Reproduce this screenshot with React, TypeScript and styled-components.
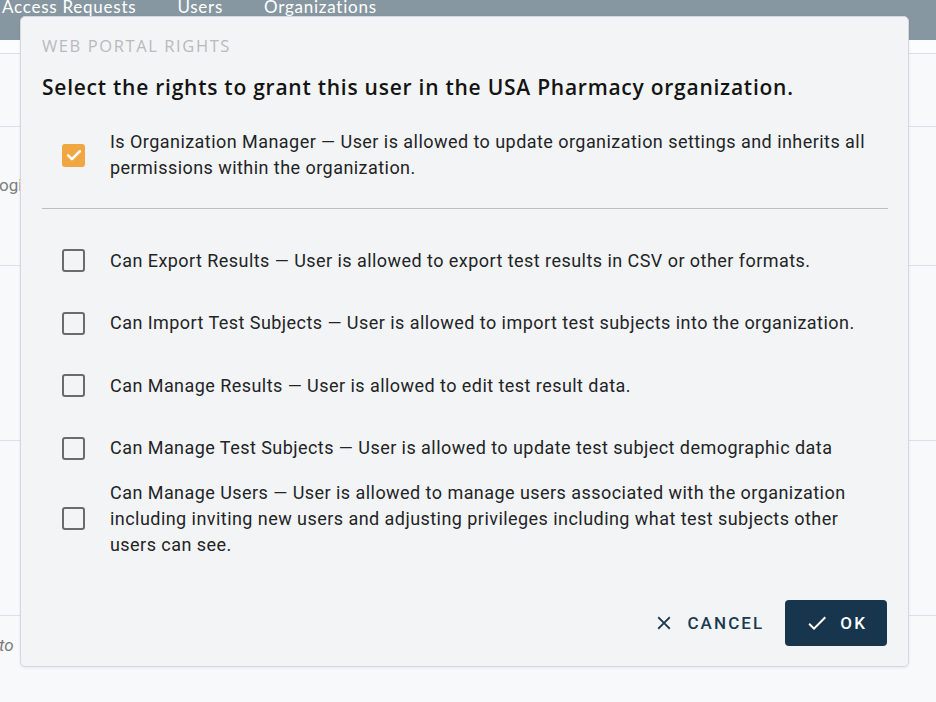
import React from "react";
import styled, { createGlobalStyle } from "styled-components";

const Global = createGlobalStyle`
  html, body { margin: 0; padding: 0; }
  body {
    background: #f8f9fb;
    font-family: Roboto, "Liberation Sans", sans-serif;
    overflow: hidden;
  }
`;

const Page = styled.div`
  position: relative;
  width: 936px;
  height: 702px;
  overflow: hidden;
  background: #f8f9fb;
`;

const NavBar = styled.nav`
  height: 40px;
  background: #8797a1;
  display: flex;
  align-items: flex-start;
  gap: 41px;
  padding-left: 2px;
`;

const NavItem = styled.span`
  font-family: Lato, "Open Sans", sans-serif;
  font-size: 17px;
  line-height: 18px;
  color: #ffffff;
  margin-top: -2px;
  letter-spacing: 0.75px;
`;

const Band = styled.div`
  height: 13px;
  background: #fbfcfd;
  border-bottom: 1px solid #dcdfe3;
`;

const BgRow = styled.div<{ $h: number; $last?: boolean; $pad?: number }>`
  height: ${(p) => p.$h}px;
  border-bottom: ${(p) => (p.$last ? "none" : "1px solid #dcdfe3")};
  padding-top: ${(p) => p.$pad ?? 0}px;
  box-sizing: border-box;
`;

const BgText = styled.span<{ $italic?: boolean }>`
  display: block;
  font-family: Roboto, sans-serif;
  font-size: 17px;
  line-height: 24px;
  color: #7a7d80;
  font-style: ${(p) => (p.$italic ? "italic" : "normal")};
  margin-left: -1px;
`;

const Dialog = styled.div`
  position: absolute;
  top: 16px;
  left: 20px;
  width: 889px;
  height: 651px;
  box-sizing: border-box;
  background: #f3f4f6;
  border: 1px solid #d6d8db;
  border-radius: 5px;
  box-shadow: 0 1px 3px rgba(0, 0, 0, 0.08);
  padding: 19px 21px 0 21px;
  display: flex;
  flex-direction: column;
`;

const Overline = styled.div`
  font-family: "Open Sans", Lato, sans-serif;
  font-size: 16.5px;
  line-height: 20px;
  letter-spacing: 1.6px;
  color: #b9babc;
`;

const Heading = styled.h2`
  margin: 17px 0 0 0;
  font-family: "Open Sans", Lato, sans-serif;
  font-weight: 600;
  font-size: 21px;
  line-height: 28px;
  letter-spacing: 0.75px;
  color: #141414;
`;

const List = styled.div<{ $top: number }>`
  display: flex;
  flex-direction: column;
  margin-top: ${(p) => p.$top}px;
`;

const Row = styled.label`
  display: flex;
  align-items: center;
  min-height: 62.5px;
  padding-left: 20px;
`;

const Box = styled.span<{ $checked?: boolean }>`
  flex: none;
  width: 23px;
  height: 23px;
  box-sizing: border-box;
  border-radius: 3px;
  border: ${(p) => (p.$checked ? "none" : "2.5px solid #6b6b6b")};
  background: ${(p) => (p.$checked ? "#f0a641" : "transparent")};
  display: flex;
  align-items: center;
  justify-content: center;
`;

const RowText = styled.span`
  margin-left: 25px;
  font-family: Roboto, sans-serif;
  font-size: 18px;
  line-height: 26px;
  letter-spacing: 0.45px;
  color: #222426;
  max-width: 765px;
`;

const Divider = styled.hr`
  border: none;
  border-top: 1px solid #bdbec0;
  margin: 21px 0 0 0;
  width: 846px;
`;

const Actions = styled.div`
  display: flex;
  justify-content: flex-end;
  align-items: center;
  gap: 21px;
  margin-top: 42px;
`;

const Button = styled.button<{ $primary?: boolean }>`
  display: flex;
  align-items: center;
  gap: ${(p) => (p.$primary ? "11px" : "12px")};
  height: 46px;
  padding: 0 ${(p) => (p.$primary ? "20px" : "0")};
  border: none;
  border-radius: 4px;
  background: ${(p) => (p.$primary ? "#17354c" : "transparent")};
  color: ${(p) => (p.$primary ? "#ffffff" : "#1a3a52")};
  font-family: Roboto, sans-serif;
  font-weight: 500;
  font-size: 17px;
  letter-spacing: 2.1px;
  cursor: pointer;
`;

const CheckMark = () => (
  <svg width="20" height="20" viewBox="0 0 24 24">
    <path d="M5 12.5l4.5 4.5L19 7.5" fill="none" stroke="#fff" strokeWidth="3" strokeLinecap="round" strokeLinejoin="round" />
  </svg>
);

const CloseIcon = () => (
  <svg width="22" height="22" viewBox="0 0 24 24" fill="currentColor">
    <path d="M19 6.41L17.59 5 12 10.59 6.41 5 5 6.41 10.59 12 5 17.59 6.41 19 12 13.41 17.59 19 19 17.59 13.41 12z" />
  </svg>
);

const OkIcon = () => (
  <svg width="24" height="24" viewBox="0 0 24 24" fill="currentColor">
    <path d="M9 16.17L4.83 12l-1.42 1.41L9 19 21 7l-1.41-1.41z" />
  </svg>
);

const rights = [
  "Can Export Results — User is allowed to export test results in CSV or other formats.",
  "Can Import Test Subjects — User is allowed to import test subjects into the organization.",
  "Can Manage Results — User is allowed to edit test result data.",
  "Can Manage Test Subjects — User is allowed to update test subject demographic data",
  "Can Manage Users — User is allowed to manage users associated with the organization including inviting new users and adjusting privileges including what test subjects other users can see.",
];

export default function App() {
  return (
    <Page>
      <Global />
      <NavBar>
        <NavItem>Access Requests</NavItem>
        <NavItem>Users</NavItem>
        <NavItem>Organizations</NavItem>
      </NavBar>
      <Band />
      <BgRow $h={73} />
      <BgRow $h={139} $pad={46}>
        <BgText>ogin</BgText>
      </BgRow>
      <BgRow $h={175} />
      <BgRow $h={175} />
      <BgRow $h={90} $last $pad={17}>
        <BgText $italic>to</BgText>
      </BgRow>

      <Dialog>
        <Overline>WEB PORTAL RIGHTS</Overline>
        <Heading>Select the rights to grant this user in the USA Pharmacy organization.</Heading>
        <List $top={23}>
          <Row>
            <Box $checked>
              <CheckMark />
            </Box>
            <RowText>
              Is Organization Manager — User is allowed to update organization settings and inherits all permissions within the organization.
            </RowText>
          </Row>
        </List>
        <Divider />
        <List $top={21}>
          {rights.map((r) => (
            <Row key={r}>
              <Box />
              <RowText>{r}</RowText>
            </Row>
          ))}
        </List>
        <Actions>
          <Button>
            <CloseIcon />
            CANCEL
          </Button>
          <Button $primary>
            <OkIcon />
            OK
          </Button>
        </Actions>
      </Dialog>
    </Page>
  );
}
